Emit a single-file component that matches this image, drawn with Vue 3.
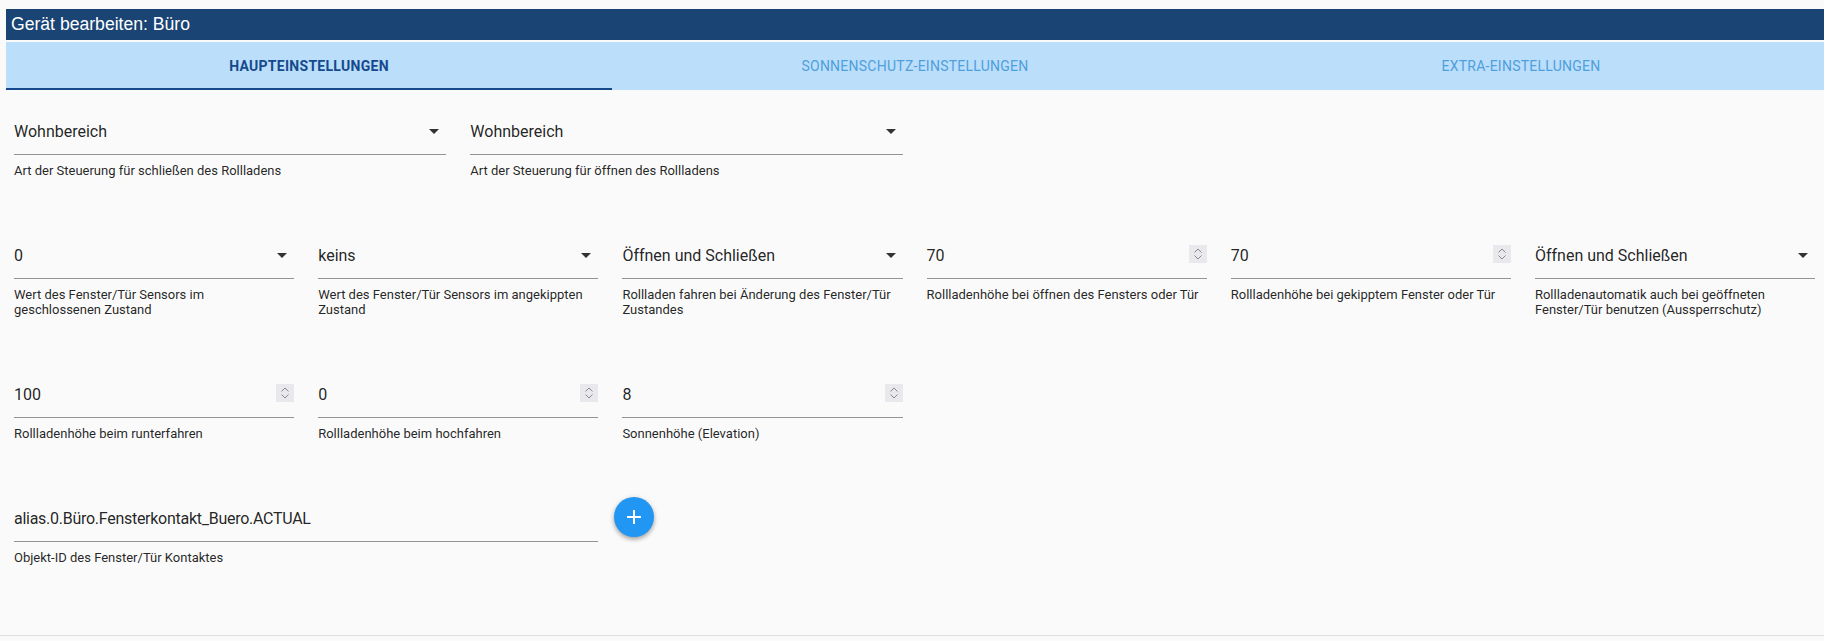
<script setup>
const rows = [
  { id: 'a', cols: 'wide', fields: [
    { type: 'select', value: 'Wohnbereich', help: 'Art der Steuerung für schließen des Rollladens' },
    { type: 'select', value: 'Wohnbereich', help: 'Art der Steuerung für öffnen des Rollladens' }
  ] },
  { id: 'b', cols: 'six', fields: [
    { type: 'select', value: '0', help: 'Wert des Fenster/Tür Sensors im geschlossenen Zustand' },
    { type: 'select', value: 'keins', help: 'Wert des Fenster/Tür Sensors im angekippten Zustand' },
    { type: 'select', value: 'Öffnen und Schließen', help: 'Rollladen fahren bei Änderung des Fenster/Tür Zustandes' },
    { type: 'number', value: '70', help: 'Rollladenhöhe bei öffnen des Fensters oder Tür' },
    { type: 'number', value: '70', help: 'Rollladenhöhe bei gekipptem Fenster oder Tür' },
    { type: 'select', value: 'Öffnen und Schließen', help: 'Rollladenautomatik auch bei geöffneten Fenster/Tür benutzen (Aussperrschutz)' }
  ] },
  { id: 'c', cols: 'six', fields: [
    { type: 'number', value: '100', help: 'Rollladenhöhe beim runterfahren' },
    { type: 'number', value: '0', help: 'Rollladenhöhe beim hochfahren' },
    { type: 'number', value: '8', help: 'Sonnenhöhe (Elevation)' }
  ] }
]
const tabs = ['Haupteinstellungen', 'Sonnenschutz-Einstellungen', 'Extra-Einstellungen']
</script>

<template>
  <div class="page">
    <header class="title">Gerät bearbeiten: Büro</header>
    <nav class="tabs">
      <div v-for="(t, i) in tabs" :key="t" class="tab" :class="{ active: i === 0 }">{{ t }}</div>
    </nav>
    <main class="content">
      <div v-for="r in rows" :key="r.id" class="row" :class="r.cols">
        <div v-for="(f, i) in r.fields" :key="i" class="field">
          <div class="control">
            <span class="value">{{ f.value }}</span>
            <svg v-if="f.type === 'select'" class="arrow" width="10" height="5" viewBox="0 0 10 5"><path d="M0 0h10L5 5z" fill="rgba(0,0,0,.8)" /></svg>
            <span v-else class="spin">
              <svg width="10" height="14" viewBox="0 0 10 14" fill="none" stroke="#8a8a8a" stroke-width="1"><path d="M1.5 5.5 5 2l3.5 3.5M1.5 8.5 5 12l3.5-3.5" /></svg>
            </span>
          </div>
          <p class="help">{{ f.help }}</p>
        </div>
      </div>
      <div class="row last">
        <div class="field">
          <div class="control"><span class="value narrow">alias.0.Büro.Fensterkontakt_Buero.ACTUAL</span></div>
          <p class="help">Objekt-ID des Fenster/Tür Kontaktes</p>
        </div>
        <button class="fab" type="button" aria-label="Hinzufügen">
          <svg width="24" height="24" viewBox="0 0 24 24"><path d="M19 13h-6v6h-2v-6H5v-2h6V5h2v6h6v2z" fill="#fff" /></svg>
        </button>
      </div>
    </main>
    <div class="bottom"></div>
  </div>
</template>

<style>
html, body { margin: 0; background: #fafafa; }
</style>

<style scoped>
.page {
  height: 641px;
  box-sizing: border-box;
  padding: 9px 0 0 6px;
  background: #fafafa;
  display: flex;
  flex-direction: column;
  overflow: hidden;
  font-family: Roboto, "Liberation Sans", sans-serif;
  color: rgba(0, 0, 0, .87);
}
.title {
  height: 31px;
  line-height: 31px;
  padding-left: 5px;
  background: #1a4473;
  color: #fff;
  font-family: "Liberation Sans", Arial, sans-serif;
  font-size: 17.6px;
}
.tabs {
  display: flex;
  margin-top: 2px;
  height: 48px;
  background: #bbdefb;
}
.tab {
  flex: 1;
  box-sizing: border-box;
  display: flex;
  align-items: center;
  justify-content: center;
  font-size: 14px;
  text-transform: uppercase;
  color: #4f9fdc;
  letter-spacing: .25px;
}
.tab.active {
  color: #164a8c;
  font-weight: 700;
  letter-spacing: .28px;
  border-bottom: 2px solid #164a8c;
  padding-top: 2px;
}
.content {
  flex: 1;
  padding: 32px 0 0 8px;
}
.row {
  display: grid;
  column-gap: 24px;
  margin-bottom: 68px;
}
.row.wide { grid-template-columns: repeat(2, 432.3px); }
.row.six { grid-template-columns: repeat(6, 280.2px); }
.row.last {
  display: flex;
  column-gap: 16px;
  margin-bottom: 0;
}
.row.last .field { width: 584px; }
.control {
  height: 32px;
  border-bottom: 1px solid #949494;
  display: flex;
  align-items: flex-start;
  justify-content: space-between;
  font-size: 16px;
}
.value {
  line-height: 19px;
}
.narrow { letter-spacing: -.27px; }
.arrow { margin: 7px 7px 0 0; }
.spin {
  width: 18px;
  height: 18px;
  margin-top: -1px;
  background: #e9e9ed;
  display: flex;
  align-items: center;
  justify-content: center;
}
.help {
  margin: 8px 0 0;
  font-size: 13px;
  line-height: 15px;
  min-height: 15px;
}
.fab {
  width: 40px;
  height: 40px;
  margin-top: -12px;
  padding: 0;
  border: 0;
  border-radius: 50%;
  background: #2196f3;
  display: flex;
  align-items: center;
  justify-content: center;
  box-shadow: 0 3px 5px -1px rgba(0,0,0,.2), 0 2px 4px 0 rgba(0,0,0,.14), 0 1px 6px 0 rgba(0,0,0,.12);
}
.bottom {
  height: 1px;
  margin: 0 0 5px -6px;
  background: #e0e0e0;
}
</style>
